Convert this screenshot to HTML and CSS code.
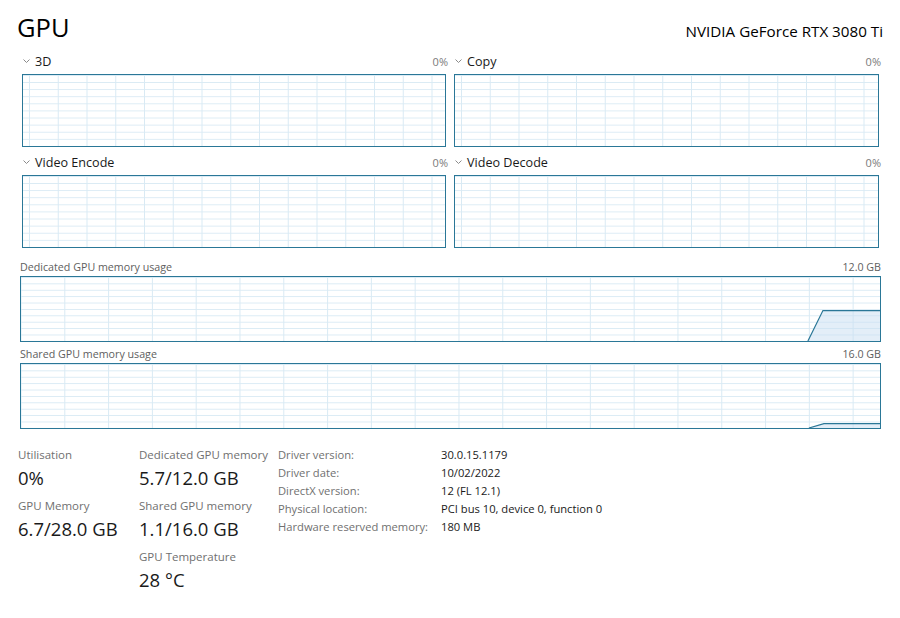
FILE: index.html
```html
<!DOCTYPE html>
<html lang="en">
<head>
  <meta charset="UTF-8">
  <meta name="viewport" content="width=device-width, initial-scale=1.0">
  <title>GPU - Performance</title>
  <link rel="stylesheet" href="styles.css">
</head>
<body>
  <!-- Header -->
  <header class="page-head">
    <h1>GPU</h1>
    <span class="device-name">NVIDIA GeForce RTX 3080 Ti</span>
  </header>

  <!-- Engine graphs -->
  <section class="engines">
    <div class="engine">
      <div class="engine-head">
        <span class="engine-title"><svg class="chevron" width="7" height="4" viewBox="0 0 7 4"><polyline points="0.5,0.5 3.5,3.5 6.5,0.5"/></svg>3D</span>
        <span class="engine-value">0%</span>
      </div>
      <div class="graph graph-small"></div>
    </div>
    <div class="engine">
      <div class="engine-head">
        <span class="engine-title"><svg class="chevron" width="7" height="4" viewBox="0 0 7 4"><polyline points="0.5,0.5 3.5,3.5 6.5,0.5"/></svg>Copy</span>
        <span class="engine-value">0%</span>
      </div>
      <div class="graph graph-small"></div>
    </div>
    <div class="engine">
      <div class="engine-head">
        <span class="engine-title"><svg class="chevron" width="7" height="4" viewBox="0 0 7 4"><polyline points="0.5,0.5 3.5,3.5 6.5,0.5"/></svg>Video Encode</span>
        <span class="engine-value">0%</span>
      </div>
      <div class="graph graph-small"></div>
    </div>
    <div class="engine">
      <div class="engine-head">
        <span class="engine-title"><svg class="chevron" width="7" height="4" viewBox="0 0 7 4"><polyline points="0.5,0.5 3.5,3.5 6.5,0.5"/></svg>Video Decode</span>
        <span class="engine-value">0%</span>
      </div>
      <div class="graph graph-small"></div>
    </div>
  </section>

  <!-- Memory graphs -->
  <section class="memory">
    <div class="mem-head">
      <span>Dedicated GPU memory usage</span>
      <span>12.0 GB</span>
    </div>
    <div class="graph graph-wide">
      <svg class="usage" viewBox="0 0 858 64" preserveAspectRatio="none">
        <polygon class="usage-fill" points="786,64 801,33.6 858,33.6 858,64"/>
        <polyline class="usage-line" points="786,64 801,33.6 858,33.6"/>
      </svg>
    </div>
    <div class="mem-head mem-head-second">
      <span>Shared GPU memory usage</span>
      <span>16.0 GB</span>
    </div>
    <div class="graph graph-wide">
      <svg class="usage" viewBox="0 0 858 64" preserveAspectRatio="none">
        <polygon class="usage-fill" points="787,64 802,59.6 858,59.6 858,64"/>
        <polyline class="usage-line" points="787,64 802,59.6 858,59.6"/>
      </svg>
    </div>
  </section>

  <!-- Stats -->
  <section class="stats">
    <div class="stat-col stat-col-first">
      <div class="stat">
        <div class="stat-label">Utilisation</div>
        <div class="stat-value">0%</div>
      </div>
      <div class="stat">
        <div class="stat-label">GPU Memory</div>
        <div class="stat-value">6.7/28.0 GB</div>
      </div>
    </div>
    <div class="stat-col stat-col-second">
      <div class="stat">
        <div class="stat-label">Dedicated GPU memory</div>
        <div class="stat-value">5.7/12.0 GB</div>
      </div>
      <div class="stat">
        <div class="stat-label">Shared GPU memory</div>
        <div class="stat-value">1.1/16.0 GB</div>
      </div>
      <div class="stat">
        <div class="stat-label">GPU Temperature</div>
        <div class="stat-value">28 °C</div>
      </div>
    </div>
    <dl class="info">
      <dt>Driver version:</dt><dd>30.0.15.1179</dd>
      <dt>Driver date:</dt><dd>10/02/2022</dd>
      <dt>DirectX version:</dt><dd>12 (FL 12.1)</dd>
      <dt>Physical location:</dt><dd>PCI bus 10, device 0, function 0</dd>
      <dt>Hardware reserved memory:</dt><dd>180 MB</dd>
    </dl>
  </section>
</body>
</html>
```

FILE: styles.css
```css
body {
    margin: 0;
    padding: 10px 19px 0 20px;
    background: #ffffff;
    color: #1a1a1a;
    font-family: 'Open Sans', 'Noto Sans', sans-serif;
}

/* 头部 */
.page-head {
    display: flex;
    justify-content: space-between;
    align-items: baseline;
    height: 41px;
}

.page-head h1 {
    margin: 0 0 0 -3px;
    font-size: 25.5px;
    font-weight: 400;
    line-height: 34px;
    color: #000;
}

.device-name {
    font-size: 15.2px;
    color: #000;
    margin-right: -2px;
}

/* 引擎图表 */
.engines {
    display: grid;
    grid-template-columns: 428px 429px;
    column-gap: 4px;
    row-gap: 5px;
}

.engine-head {
    display: flex;
    justify-content: space-between;
    align-items: center;
    height: 20px;
    margin-bottom: 3px;
    padding-left: 3px;
}

.engine-title {
    display: flex;
    align-items: center;
    font-size: 12.6px;
    color: #1a1a1a;
}

.chevron {
    margin-right: 5px;
    fill: none;
    stroke: #8a8a8a;
    stroke-width: 1;
}

.engine-value {
    font-size: 11px;
    color: #7a7a7a;
}

.graph {
    position: relative;
    border: 1px solid #2a7797;
    background-color: #fff;
}

.graph-small {
    height: 71px;
    margin: 0 2px;
    background-image:
        linear-gradient(to right, #d9eaf4 1px, transparent 1px),
        linear-gradient(to bottom, #d9eaf4 1px, transparent 1px);
    background-size: 28.75px 100%, 100% 7.1px;
    background-position: 6px 0, 0 0;
}

/* 内存图表 */
.memory {
    margin-top: 10px;
}

.mem-head {
    display: flex;
    justify-content: space-between;
    height: 18px;
    line-height: 18px;
    font-size: 10.7px;
    color: #606060;
}

.mem-head-second {
    margin-top: 3px;
}

.graph-wide {
    height: 64px;
    background-image:
        linear-gradient(to right, #d9eaf4 1px, transparent 1px),
        linear-gradient(to bottom, #d9eaf4 1px, transparent 1px);
    background-size: 43.8px 100%, 100% 6.4px;
    background-position: -0.5px 0, 0 0;
}

.usage {
    position: absolute;
    left: 0;
    top: 0;
    width: 100%;
    height: 100%;
}

.usage-fill {
    fill: rgba(200, 222, 242, 0.5);
}

.usage-line {
    fill: none;
    stroke: #2a7797;
    stroke-width: 1.2;
}

/* 统计信息 */
.stats {
    display: flex;
    align-items: flex-start;
    margin-top: 17px;
    margin-left: -2px;
}

.stat-col-first {
    width: 121px;
}

.stat-col-second {
    width: 139px;
}

.stat {
    margin-bottom: 5px;
}

.stat-label {
    font-size: 11.5px;
    line-height: 18px;
    color: #707070;
}

.stat-value {
    font-size: 18.5px;
    line-height: 28px;
    color: #1a1a1a;
}

.info {
    display: grid;
    grid-template-columns: 163px auto;
    align-content: start;
    margin: 0;
    font-size: 11.2px;
    line-height: 18px;
}

.info dt {
    color: #707070;
}

.info dd {
    margin: 0;
    color: #1a1a1a;
}
```
